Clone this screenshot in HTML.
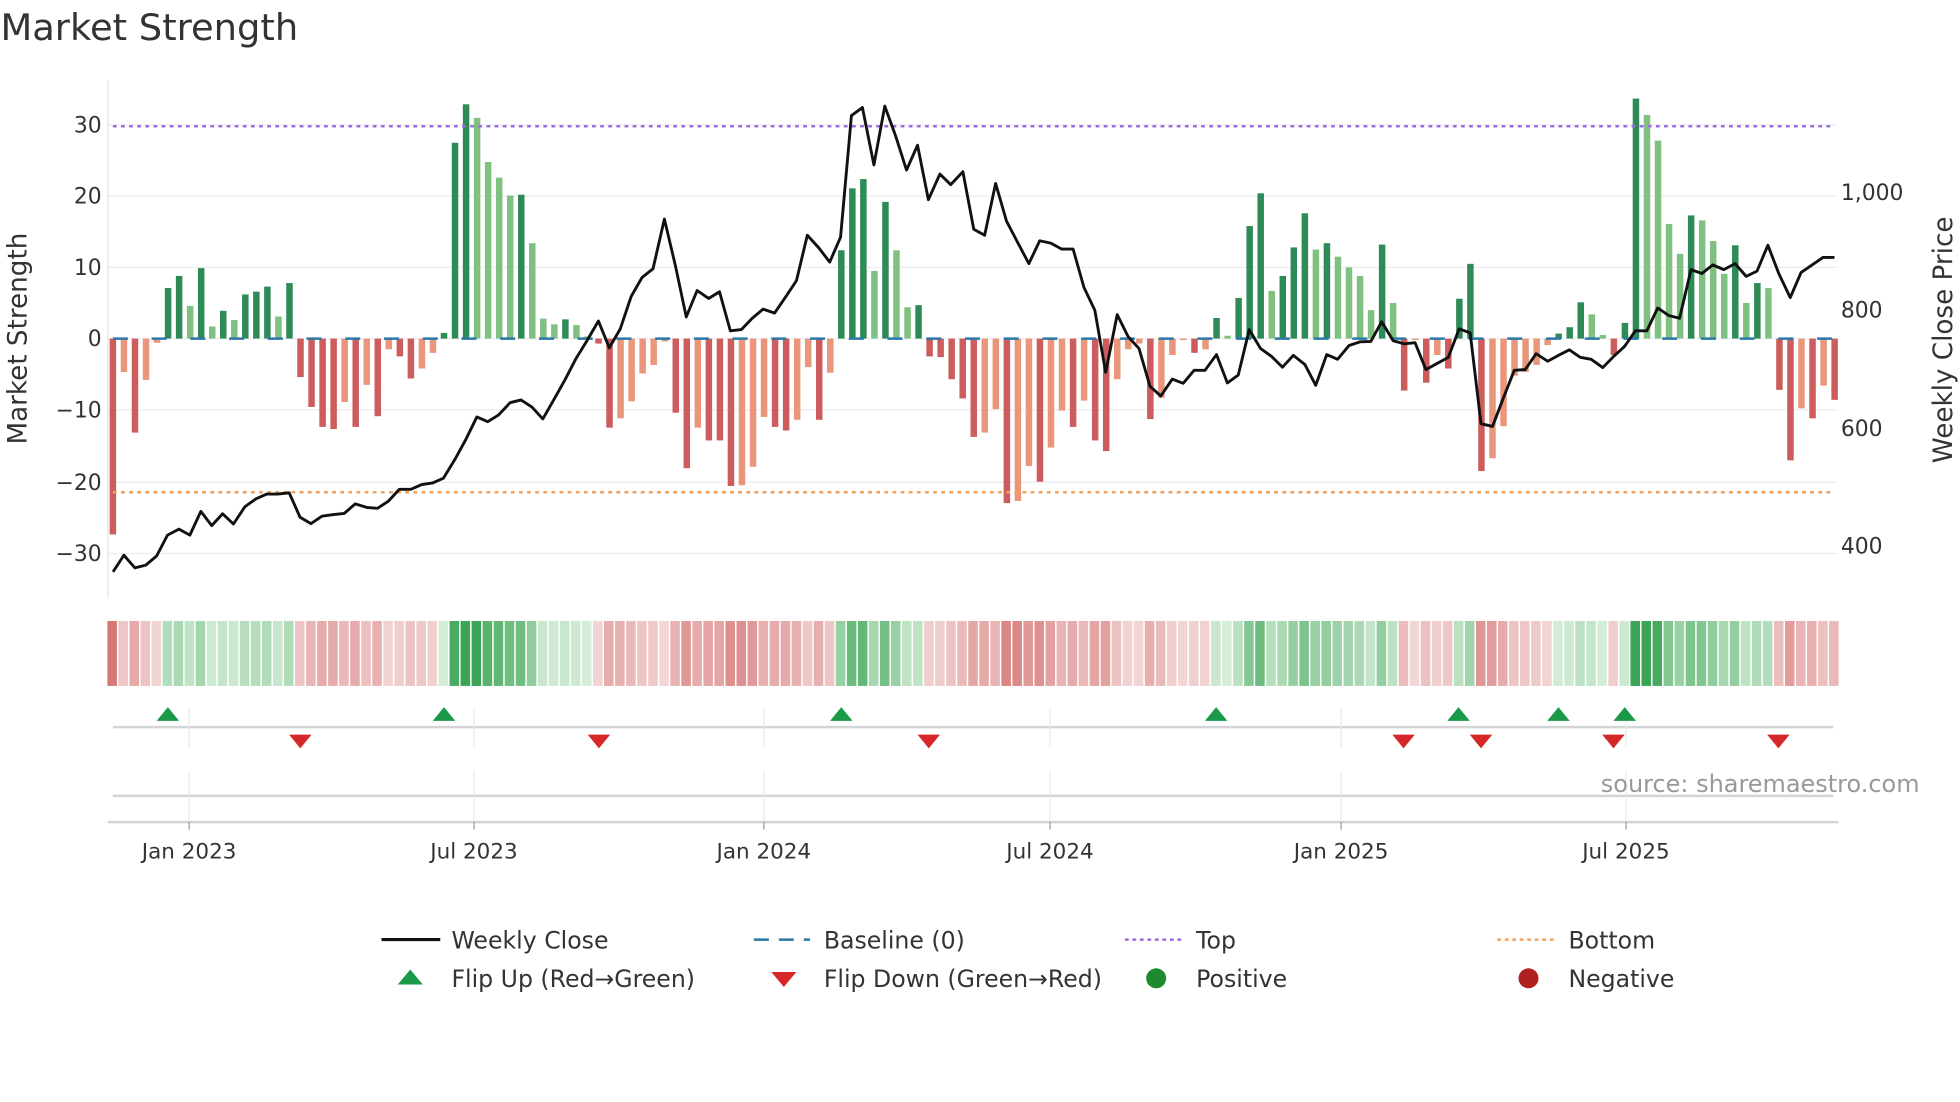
<!DOCTYPE html>
<html><head><meta charset="utf-8"><style>
html,body{margin:0;padding:0;background:#fff;width:1960px;height:1102px;overflow:hidden}
svg{display:block}
text{font-family:"DejaVu Sans","Liberation Sans",sans-serif}
</style></head><body>
<svg id="s" width="1960" height="1102" viewBox="0 0 1568 882" xmlns="http://www.w3.org/2000/svg">
<rect width="1568" height="882" fill="#fff"/>
<text x="0" y="32" font-size="29.5" fill="#333">Market Strength</text>
<g id="grid" stroke="#ececf0" stroke-width="1"></g>
<line x1="86" y1="64" x2="86" y2="478" stroke="#e4e4e8"/>
<g id="bars"></g>
<line x1="90" y1="101" x2="1468" y2="101" stroke="#9b6de0" stroke-width="2" stroke-dasharray="3,3.5"/>
<line x1="90" y1="394" x2="1468" y2="394" stroke="#f2a05a" stroke-width="2" stroke-dasharray="3,3.5"/>
<line x1="90" y1="271" x2="1468" y2="271" stroke="#2a78a8" stroke-width="2" stroke-dasharray="12,19"/>
<polyline id="price" fill="none" stroke="#111" stroke-width="2.3" stroke-linejoin="round"/>
<g id="heat"></g>
<g font-size="17.5" fill="#333">
<text x="81" y="106" text-anchor="end">30</text>
<text x="81" y="163" text-anchor="end">20</text>
<text x="81" y="220" text-anchor="end">10</text>
<text x="81" y="277" text-anchor="end">0</text>
<text x="81" y="334" text-anchor="end">−10</text>
<text x="81" y="392" text-anchor="end">−20</text>
<text x="81" y="449" text-anchor="end">−30</text>
<text x="1473" y="160">1,000</text>
<text x="1473" y="254">800</text>
<text x="1473" y="349">600</text>
<text x="1473" y="443">400</text>
</g>
<text transform="translate(21,271) rotate(-90)" font-size="21" fill="#333" text-anchor="middle">Market Strength</text>
<text transform="translate(1562,272) rotate(-90)" font-size="21" fill="#333" text-anchor="middle">Weekly Close Price</text>
<g stroke="#d4d4d8" stroke-width="2">
<line x1="90" y1="582" x2="1467" y2="582"/>
<line x1="90" y1="637" x2="1467" y2="637"/>
<line x1="86" y1="658" x2="1471" y2="658"/>
</g>
<g id="vgrid" stroke="#e8e8ec" stroke-width="1"></g>
<g id="flips"></g>
<text x="1536" y="634" font-size="19.2" fill="#999" text-anchor="end">source: sharemaestro.com</text>
<g font-size="17.2" fill="#333" text-anchor="middle">
<text x="151" y="687">Jan 2023</text><text x="379" y="687">Jul 2023</text><text x="611" y="687">Jan 2024</text>
<text x="840" y="687">Jul 2024</text><text x="1073" y="687">Jan 2025</text><text x="1301" y="687">Jul 2025</text>
</g>
<g font-size="18.9" fill="#333">
<line x1="305" y1="752" x2="352" y2="752" stroke="#111" stroke-width="2.5"/>
<text x="361" y="759">Weekly Close</text>
<line x1="603" y1="752" x2="648" y2="752" stroke="#2a78a8" stroke-width="2" stroke-dasharray="12,8"/>
<text x="659" y="759">Baseline (0)</text>
<line x1="900" y1="752" x2="945" y2="752" stroke="#9b6de0" stroke-width="2" stroke-dasharray="3,3"/>
<text x="957" y="759">Top</text>
<line x1="1198" y1="752" x2="1243" y2="752" stroke="#f2a05a" stroke-width="2" stroke-dasharray="3,3"/>
<text x="1255" y="759">Bottom</text>
<polygon points="318,788 338,788 328,776" fill="#1a9a48"/>
<text x="361" y="790">Flip Up (Red→Green)</text>
<polygon points="617,778 637,778 627,790" fill="#d62828"/>
<text x="659" y="790">Flip Down (Green→Red)</text>
<circle cx="925" cy="783" r="8" fill="#1e8a2e"/>
<text x="957" y="790">Positive</text>
<circle cx="1223" cy="783" r="8" fill="#b02020"/>
<text x="1255" y="790">Negative</text>
</g>
</svg>
<script>
var NS="http://www.w3.org/2000/svg";
function el(p,t,a){var e=document.createElementNS(NS,t);for(var k in a)e.setAttribute(k,a[k]);document.getElementById(p).appendChild(e);return e;}
[100,157,214,271,328,386,443].forEach(function(y){el("grid","line",{x1:86,y1:y,x2:1470,y2:y});});
var V=[[-27.5,1],[-4.7,0],[-13.2,1],[-5.8,0],[-0.6,0],[7.1,1],[8.8,1],[4.6,0],[9.9,1],[1.7,0],[3.9,1],[2.6,0],[6.2,1],[6.6,1],[7.3,1],[3.1,0],[7.8,1],[-5.4,1],[-9.6,1],[-12.4,1],[-12.7,1],[-8.9,0],[-12.4,1],[-6.5,0],[-10.9,1],[-1.5,0],[-2.5,1],[-5.6,1],[-4.2,0],[-2,0],[0.8,1],[27.5,1],[32.9,1],[31,0],[24.8,0],[22.6,0],[20.1,0],[20.2,1],[13.4,0],[2.8,0],[2,0],[2.7,1],[1.9,0],[0.3,0],[-0.7,1],[-12.5,1],[-11.2,0],[-8.8,0],[-4.9,0],[-3.7,0],[-0.4,0],[-10.4,1],[-18.2,1],[-12.5,0],[-14.3,1],[-14.3,1],[-20.7,1],[-20.6,0],[-18,0],[-11,0],[-12.4,1],[-12.9,1],[-11.4,0],[-4,0],[-11.4,1],[-4.8,0],[12.4,1],[21.1,1],[22.4,1],[9.5,0],[19.2,1],[12.4,0],[4.4,0],[4.7,1],[-2.5,1],[-2.6,1],[-5.7,1],[-8.4,1],[-13.8,1],[-13.2,0],[-9.9,0],[-23.1,1],[-22.8,0],[-17.9,0],[-20.1,1],[-15.3,0],[-10.1,0],[-12.4,1],[-8.7,0],[-14.3,1],[-15.8,1],[-5.7,0],[-1.5,0],[-0.7,0],[-11.3,1],[-8.3,0],[-2.3,0],[-0.2,0],[-2,1],[-1.5,0],[2.9,1],[0.4,0],[5.7,1],[15.8,1],[20.4,1],[6.7,0],[8.8,1],[12.8,1],[17.6,1],[12.5,0],[13.4,1],[11.5,0],[10,0],[8.8,0],[4,0],[13.2,1],[5,0],[-7.3,1],[-0.2,0],[-6.2,1],[-2.3,0],[-4.2,1],[5.6,1],[10.5,1],[-18.6,1],[-16.8,0],[-12.3,0],[-5.2,0],[-4.7,0],[-3.7,0],[-0.9,0],[0.7,1],[1.6,1],[5.1,1],[3.4,0],[0.5,0],[-2.3,1],[2.2,1],[33.7,1],[31.4,0],[27.8,0],[16.1,0],[11.9,0],[17.3,1],[16.6,0],[13.7,0],[9.1,0],[13.1,1],[5,0],[7.8,1],[7.1,0],[-7.2,1],[-17.1,1],[-9.8,0],[-11.2,1],[-6.6,0],[-8.6,1]];
var N=V.length,step=(1468-90)/(N-1);
V.forEach(function(d,i){
 var x=90+step*i,v=d[0],h=Math.abs(v)*5.7,y=v>0?271-h:271;
 var c=v>0?(d[1]?"#2e8b57":"#80c080"):(d[1]?"#cd5c5c":"#e9967a");
 el("bars","rect",{x:x-2.6,y:y,width:5.2,height:Math.max(h,0.8),fill:c});
 var a=Math.min(1,Math.abs(v)/30);
 var col;
 if(v>0){var r=Math.round(215-(215-60)*a),g=Math.round(238-(238-165)*a),b=Math.round(218-(218-85)*a);col="rgb("+r+","+g+","+b+")";}
 else{var r=Math.round(242-(242-212)*a),g=Math.round(214-(214-112)*a),b=Math.round(214-(214-110)*a);col="rgb("+r+","+g+","+b+")";}
 el("heat","rect",{x:x-4.4,y:497,width:step-1.2,height:52,fill:col});
});
var p1=[[22,1245],[41,1203],[60,1235],[79,1228],[98,1205],[117,1152],[137,1137],[156,1152],[175,1092],[194,1128],[213,1098],[232,1124],[252,1080],[271,1060],[290,1048],[309,1048],[329,1045],[348,1107],[367,1123],[386,1104],[406,1100],[425,1097],[444,1073],[464,1082],[483,1084],[502,1066],[521,1036],[541,1036],[560,1024],[579,1020],[598,1008],[618,960],[637,910],[656,853],[675,865],[694,848],[714,817],[733,810],[752,828],[771,858],[790,810],[810,758],[829,705],[848,660],[868,610],[887,678],[906,630],[925,548],[944,500],[963,478],[983,352],[1002,470],[1021,600],[1040,533],[1060,553],[1079,536],[1098,635],[1117,632],[1136,603],[1155,580],[1175,590],[1194,550],[1213,508],[1232,393],[1252,425],[1271,461],[1290,398],[1309,90],[1328,70],[1348,215],[1367,66],[1386,142],[1405,228],[1424,165],[1443,303],[1463,238],[1482,265]];
var p2=[[5,232],[24,378],[43,393],[62,262],[81,357],[100,410],[120,465],[139,407],[158,413],[177,428],[197,428],[216,525],[235,583],[254,740],[274,594],[293,650],[312,680],[331,775],[350,800],[370,757],[389,768],[408,735],[427,735],[447,695],[466,767],[485,747],[504,632],[524,680],[543,700],[562,727],[581,697],[601,720],[620,773],[639,695],[658,707],[678,672],[697,663],[716,662],[735,612],[755,660],[774,668],[793,665],[812,733],[831,718],[851,702],[870,630],[889,640],[908,870],[928,877],[947,805],[966,735],[985,733],[1004,693],[1024,712],[1043,697],[1062,683],[1081,702],[1100,707],[1120,728],[1139,700],[1158,675],[1177,635],[1197,635],[1216,577],[1235,596],[1254,603],[1274,480],[1293,490],[1312,468],[1331,480],[1351,465],[1370,497],[1389,484],[1408,418],[1427,490],[1447,551],[1466,487],[1485,468],[1504,449],[1524,449]];
var pts=[];
p1.forEach(function(p){pts.push(((100+p[0]/1.742)/1.25).toFixed(1)+","+((80+p[1]/2.53)/1.25).toFixed(1));});
p2.forEach(function(p){pts.push(((960+p[0]/1.742)/1.25).toFixed(1)+","+((80+p[1]/2.53)/1.25).toFixed(1));});
document.getElementById("price").setAttribute("points",pts.join(" "));
[151,379,611,840,1073,1301].forEach(function(x){
 el("vgrid","line",{x1:x,y1:567,x2:x,y2:598});el("vgrid","line",{x1:x,y1:617,x2:x,y2:657});
 el("vgrid","line",{x1:x,y1:658,x2:x,y2:664,stroke:"#999"});
});
[134,355,673,973,1167,1247,1300].forEach(function(x){el("flips","polygon",{points:(x-9)+",577 "+(x+9)+",577 "+x+",566",fill:"#1a9a48"});});
[240,479,743,1123,1185,1291,1423].forEach(function(x){el("flips","polygon",{points:(x-9)+",588 "+(x+9)+",588 "+x+",599",fill:"#d62828"});});
</script>
</body></html>
